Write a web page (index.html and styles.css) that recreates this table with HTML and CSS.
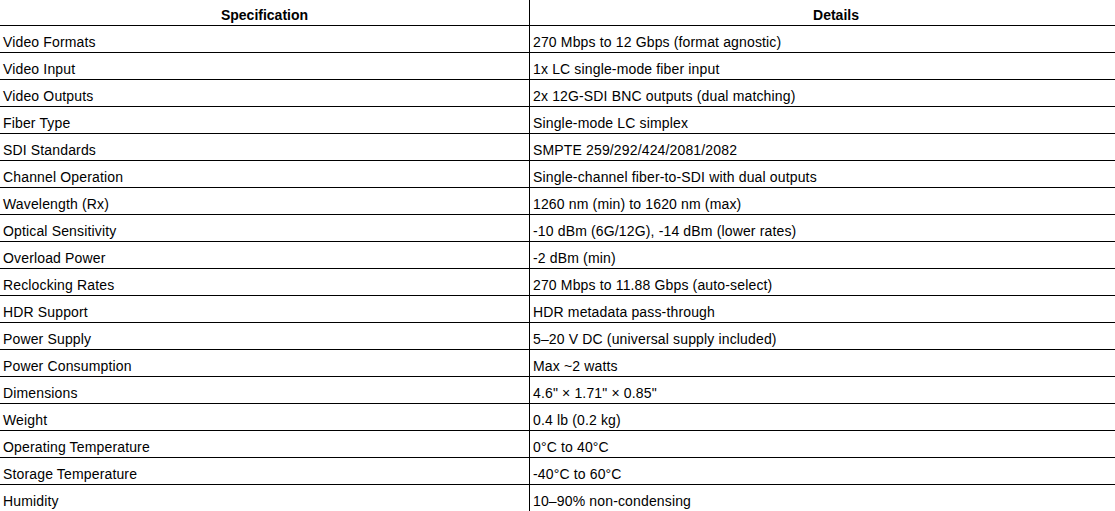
FILE: index.html
```html
<!DOCTYPE html>
<html lang="en">
<head>
<meta charset="utf-8">
<title>Specifications</title>
<link rel="stylesheet" href="styles.css">
</head>
<body>
<table class="spec-table">
  <colgroup>
    <col class="col-spec">
    <col class="col-details">
  </colgroup>
  <thead>
    <tr><th>Specification</th><th>Details</th></tr>
  </thead>
  <tbody>
    <tr><td>Video Formats</td><td>270 Mbps to 12 Gbps (format agnostic)</td></tr>
    <tr><td>Video Input</td><td>1x LC single-mode fiber input</td></tr>
    <tr><td>Video Outputs</td><td>2x 12G-SDI BNC outputs (dual matching)</td></tr>
    <tr><td>Fiber Type</td><td>Single-mode LC simplex</td></tr>
    <tr><td>SDI Standards</td><td>SMPTE 259/292/424/2081/2082</td></tr>
    <tr><td>Channel Operation</td><td>Single-channel fiber-to-SDI with dual outputs</td></tr>
    <tr><td>Wavelength (Rx)</td><td>1260 nm (min) to 1620 nm (max)</td></tr>
    <tr><td>Optical Sensitivity</td><td>-10 dBm (6G/12G), -14 dBm (lower rates)</td></tr>
    <tr><td>Overload Power</td><td>-2 dBm (min)</td></tr>
    <tr><td>Reclocking Rates</td><td>270 Mbps to 11.88 Gbps (auto-select)</td></tr>
    <tr><td>HDR Support</td><td>HDR metadata pass-through</td></tr>
    <tr><td>Power Supply</td><td>5–20 V DC (universal supply included)</td></tr>
    <tr><td>Power Consumption</td><td>Max ~2 watts</td></tr>
    <tr><td>Dimensions</td><td>4.6" × 1.71" × 0.85"</td></tr>
    <tr><td>Weight</td><td>0.4 lb (0.2 kg)</td></tr>
    <tr><td>Operating Temperature</td><td>0°C to 40°C</td></tr>
    <tr><td>Storage Temperature</td><td>-40°C to 60°C</td></tr>
    <tr><td>Humidity</td><td>10–90% non-condensing</td></tr>
  </tbody>
</table>
</body>
</html>
```
FILE: styles.css
```css
html, body {
  margin: 0;
  padding: 0;
  overflow: hidden;
  background: #fff;
}

body {
  font-family: "Liberation Sans", Arial, sans-serif;
  font-size: 14px;
  color: #000;
}

.spec-table {
  border-collapse: collapse;
  table-layout: fixed;
  width: 1144px;
  margin: -2px 0 0 -1px;
}

.col-spec {
  width: 530px;
}

.spec-table th,
.spec-table td {
  border: 1px solid #000;
  padding: 8px 3px 2px 3px;
  line-height: 16px;
  text-align: left;
  vertical-align: top;
  white-space: nowrap;
}

.spec-table td {
  letter-spacing: 0.15px;
}

.spec-table th {
  font-weight: bold;
  text-align: center;
}
```
